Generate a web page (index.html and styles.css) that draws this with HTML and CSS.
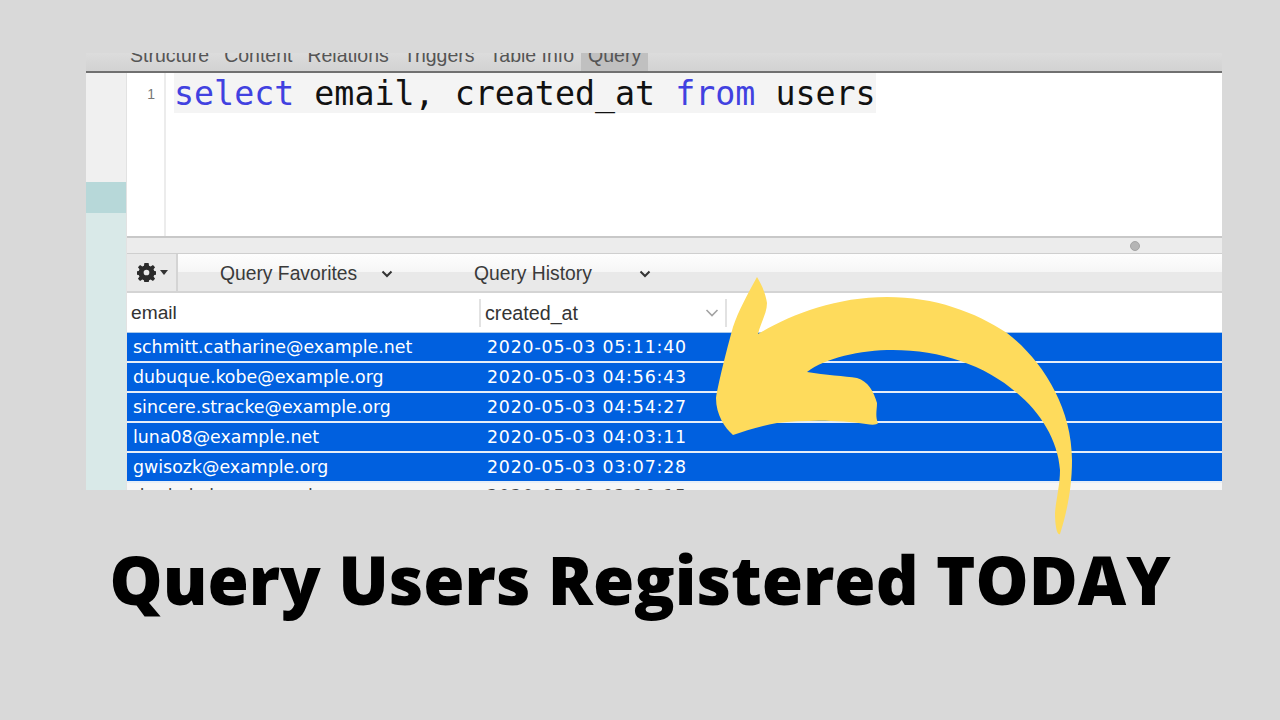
FILE: index.html
```html
<!DOCTYPE html>
<html lang="en">
<head>
<meta charset="utf-8">
<title>Query Users Registered TODAY</title>
<link rel="stylesheet" href="styles.css">
</head>
<body>
<div class="window">
  <div class="tabs">
    <span class="tab">Structure</span>
    <span class="tab">Content</span>
    <span class="tab">Relations</span>
    <span class="tab">Triggers</span>
    <span class="tab">Table Info</span>
    <span class="tab tab-active">Query</span>
  </div>
  <div class="body">
    <aside class="sidebar">
      <div class="side-top"></div>
      <div class="side-selected"></div>
      <div class="side-rest"></div>
    </aside>
    <main class="main">
      <div class="editor">
        <div class="gutter">1</div>
        <div class="code"><div class="code-line"><span class="kw">select</span> email, created_at <span class="kw">from</span> users</div></div>
      </div>
      <div class="splitter"><span class="handle"></span></div>
      <div class="toolbar">
        <div class="gear-btn">
          <svg class="gear" viewBox="0 0 20 20" width="19" height="19"><path fill-rule="evenodd" fill="#2b2b2b" d="M7.800 0h4.400l.5 2.800 1.700.8 2.400-1.600 2.200 2.400-1.600 2.300.8 1.700 2.800.5v3.200l-2.800.5-.8 1.700 1.600 2.300-2.200 2.400-2.400-1.600-1.700.8-.5 2.800H7.800l-.5-2.800-1.700-.8-2.400 1.600L1 16.600l1.600-2.300-.8-1.700L-1 12.100V8.900l2.800-.5.8-1.700L1 4.400 3.200 2l2.400 1.600 1.700-.8zM10 7a3 3 0 1 0 0 6 3 3 0 0 0 0-6z"/></svg>
          <span class="caret"></span>
        </div>
        <div class="tool tool-fav">Query Favorites
          <svg class="chev" viewBox="0 0 12 8" width="12" height="8"><path d="M1.500 1.500 6 6l4.500-4.500" fill="none" stroke="#333" stroke-width="2"/></svg>
        </div>
        <div class="tool tool-hist">Query History
          <svg class="chev" viewBox="0 0 12 8" width="12" height="8"><path d="M1.500 1.500 6 6l4.500-4.500" fill="none" stroke="#333" stroke-width="2"/></svg>
        </div>
      </div>
      <div class="thead">
        <div class="th th-email">email</div>
        <div class="th th-created"><span class="th-label">created_at</span>
          <svg class="sort" viewBox="0 0 14 8" width="14" height="8"><path d="M1.500 1 7 6.500 12.500 1" fill="none" stroke="#a3a3a3" stroke-width="1.600"/></svg>
        </div>
      </div>
      <div class="rows">
        <div class="row"><span class="c-email">schmitt.catharine@example.net</span><span class="c-date">2020-05-03 05:11:40</span></div>
        <div class="row"><span class="c-email">dubuque.kobe@example.org</span><span class="c-date">2020-05-03 04:56:43</span></div>
        <div class="row"><span class="c-email">sincere.stracke@example.org</span><span class="c-date">2020-05-03 04:54:27</span></div>
        <div class="row"><span class="c-email">luna08@example.net</span><span class="c-date">2020-05-03 04:03:11</span></div>
        <div class="row"><span class="c-email">gwisozk@example.org</span><span class="c-date">2020-05-03 03:07:28</span></div>
        <div class="row row-plain"><span class="c-email">rhoda.kuhn@example.com</span><span class="c-date">2020-05-03 02:10:15</span></div>
      </div>
    </main>
  </div>
</div>
<h1 class="title">Query Users Registered TODAY</h1>
<svg class="arrow" viewBox="0 0 1280 720" width="1280" height="720"><path fill="#fedb5c" d="M757 277C762 285 766 295 767 303C767 313 761 322 758 334C790 315 835 297 887 297C935 297 975 312 1007 333C1040 358 1072 405 1072 460C1072 490 1066 515 1060 534C1057 536 1055 525 1055 513C1056 500 1060 485 1060 470C1058 440 1040 412 1017 393C985 365 940 350 893 350C860 350 825 358 807 372C825 375 845 376 857 378C868 381 874 392 877 403C877 410 875 416 878 423C877 425 872 425 866 424C840 420 805 420 777 423C760 426 745 431 733 435C725 428 716 415 716 398C718 385 726 352 733 327C738 312 748 293 757 277Z"/></svg>
</body>
</html>
```

FILE: styles.css
```css
* { box-sizing: border-box; }
html, body { margin: 0; height: 720px; overflow: hidden; }
body {
  position: relative;
  background: #d9d9d9;
  padding: 53px 58px 0 86px;
  font-family: "Liberation Sans", Arial, sans-serif;
}
.window {
  height: 437px;
  display: flex;
  flex-direction: column;
  overflow: hidden;
  background: #fff;
}
.tabs {
  flex: none;
  height: 20px;
  background: linear-gradient(#dcdcdc, #d2d2d2);
  border-bottom: 2px solid #707070;
  display: flex;
  align-items: flex-end;
  padding-left: 44px;
  gap: 15px;
  overflow: hidden;
  color: #555;
  font-size: 19.500px;
  line-height: 24px;
}
.tab { flex: none; height: 24px; margin-bottom: 4px; }
.tab-active {
  background: #c0c0c0;
  height: 28px;
  margin: 0 0 0 -8px;
  padding: 0 7px 4px;
}
.body { flex: 1; display: flex; min-height: 0; }
.sidebar {
  flex: none;
  width: 41px;
  display: flex;
  flex-direction: column;
  border-right: 1px solid #e2e2e2;
}
.side-top { height: 109px; background: #f0f0f0; }
.side-selected { height: 31px; background: #b7d8d9; }
.side-rest { flex: 1; background: #d9e9e8; }
.main { flex: 1; min-width: 0; display: flex; flex-direction: column; }
.editor { flex: none; height: 163px; display: flex; background: #fff; }
.gutter {
  flex: none;
  width: 39px;
  border-right: 2px solid #ececec;
  text-align: right;
  padding: 13px 9px 0 0;
  color: #777;
  font-size: 14px;
  line-height: 16px;
}
.code { flex: 1; padding-left: 8px; }
.code-line {
  display: inline-block;
  height: 40px;
  padding-top: 1px;
  background: #f4f4f4;
  font-family: "DejaVu Sans Mono", monospace;
  font-size: 33.300px;
  line-height: 40px;
  color: #111;
  white-space: pre;
}
.kw { color: #4141e0; }
.splitter {
  flex: none;
  height: 18px;
  background: #ececec;
  border-top: 2px solid #c8c8c8;
  border-bottom: 1px solid #cfcfcf;
  display: flex;
  align-items: center;
  justify-content: flex-end;
  padding-right: 82px;
}
.handle {
  width: 10px;
  height: 10px;
  border-radius: 50%;
  background: #b5b5b5;
  border: 1px solid #a5a5a5;
}
.toolbar {
  flex: none;
  height: 39px;
  background: linear-gradient(#fefefe 0, #f6f6f6 48%, #e9e9e9 48%, #e9e9e9 100%);
  border-bottom: 2px solid #d4d4d4;
  display: flex;
  align-items: center;
  color: #3a3a3a;
  font-size: 19.300px;
}
.gear-btn {
  flex: none;
  width: 51px;
  height: 100%;
  display: flex;
  align-items: center;
  padding-left: 10px;
  gap: 4px;
  border-right: 2px solid #d4d4d4;
  background: #e9e9e9;
}
.caret {
  width: 0;
  height: 0;
  border-left: 4px solid transparent;
  border-right: 4px solid transparent;
  border-top: 5px solid #333;
}
.tool { flex: none; display: flex; align-items: center; white-space: nowrap; padding-top: 2px; }
.tool-fav { width: 254px; margin-left: 42px; gap: 24px; }
.tool-hist { gap: 47px; }
.thead {
  flex: none;
  height: 40px;
  display: flex;
  align-items: center;
  background: #fff;
  color: #333;
  font-size: 19.200px;
  border-bottom: 1px solid #a9c9ea;
}
.th { height: 28px; line-height: 28px; display: flex; align-items: center; }
.th-email { width: 352px; padding-left: 4px; }
.th-created {
  width: 248px;
  padding-left: 4px;
  justify-content: space-between;
  padding-right: 6px;
  border-left: 2px solid #e2e2e2;
  border-right: 2px solid #e2e2e2;
}
.th-label { font-size: 19.700px; }
.rows { flex: 1; min-height: 0; overflow: hidden; background: #f6f6f6; }
.row {
  height: 30px;
  display: flex;
  align-items: center;
  background: #0060df;
  border-bottom: 2px solid #e6eef8;
  color: #fff;
  font-family: "DejaVu Sans", sans-serif;
  font-size: 17.400px;
  line-height: 20px;
  white-space: nowrap;
}
.row-plain {
  background: #f6f6f6;
  color: #444;
  border-bottom: 0;
  align-items: flex-start;
  padding-top: 3px;
}
.c-email { flex: none; width: 360px; padding-left: 6px; }
.c-date { flex: none; letter-spacing: .8px; }
.title {
  margin: 45px 0 0 -86px;
  width: 1280px;
  text-align: center;
  font-family: "Open Sans", sans-serif;
  font-weight: 800;
  font-size: 66.800px;
  line-height: 90px;
  color: #000;
  white-space: nowrap;
}
.arrow { position: absolute; left: 0; top: 0; }
```
